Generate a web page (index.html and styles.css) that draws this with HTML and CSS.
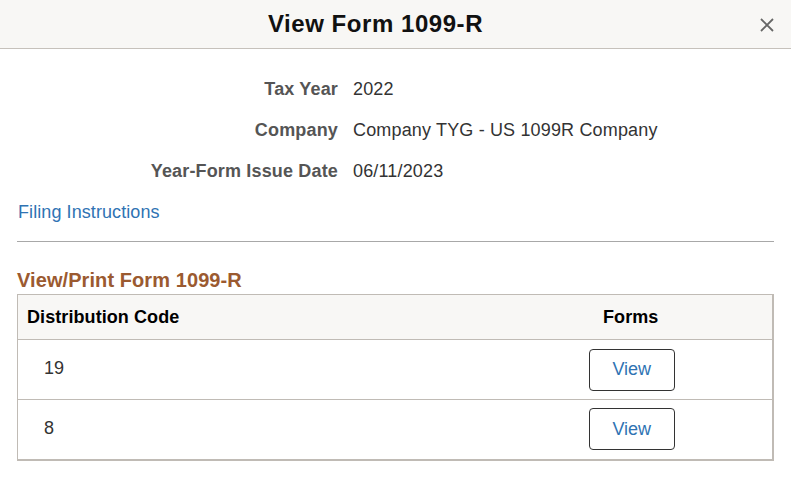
FILE: index.html
```html
<!DOCTYPE html>
<html>
<head>
<meta charset="utf-8">
<link rel="stylesheet" href="styles.css">
</head>
<body>
<div class="modal">
  <header class="hdr">
    <h1 class="title">View Form 1099-R</h1>
    <button class="close" aria-label="Close">
      <svg width="14" height="14" viewBox="0 0 14 14"><path d="M1 1L13 13M13 1L1 13" stroke="#666" stroke-width="1.8" fill="none"/></svg>
    </button>
  </header>
  <main class="body">
    <dl class="fields">
      <dt>Tax Year</dt><dd>2022</dd>
      <dt>Company</dt><dd>Company TYG - US 1099R Company</dd>
      <dt>Year-Form Issue Date</dt><dd>06/11/2023</dd>
    </dl>
    <a class="link" href="#">Filing Instructions</a>
    <hr class="sep">
    <h2 class="sect">View/Print Form 1099-R</h2>
    <table class="grid">
      <thead>
        <tr><th class="c1">Distribution Code</th><th class="c2">Forms</th></tr>
      </thead>
      <tbody>
        <tr><td class="c1">19</td><td class="c2"><button class="btn">View</button></td></tr>
        <tr><td class="c1">8</td><td class="c2"><button class="btn">View</button></td></tr>
      </tbody>
    </table>
  </main>
</div>
</body>
</html>
```
FILE: styles.css
```css
* { box-sizing: border-box; }
html, body { margin: 0; padding: 0; background: #fff; }
body { font-family: "Liberation Sans", Arial, sans-serif; color: #333; font-size: 18px; letter-spacing: 0.08px; }
.hdr {
  height: 49px;
  background: #f8f7f5;
  border-bottom: 1px solid #c6c1bb;
  display: flex;
  align-items: center;
  justify-content: center;
  padding-right: 40px;
  position: relative;
}
.title { margin: 0; font-size: 24px; font-weight: bold; color: #111; letter-spacing: 0.55px; }
.close {
  position: absolute; right: 17px; top: 18px;
  border: 0; background: transparent; padding: 0; width: 14px; height: 14px; display: flex;
}
.body { padding: 0 17px; }
.fields {
  margin: 30px 0 0 0;
  display: grid;
  grid-template-columns: 321px 1fr;
  column-gap: 15px;
  row-gap: 20px;
  line-height: 21px;
  letter-spacing: 0.16px;
}
.fields dt { text-align: right; font-weight: bold; color: #555; }
.fields dd { margin: 0; color: #333; }
.link { display: block; margin-top: 20px; margin-left: 1px; color: #2f73b3; text-decoration: none; line-height: 21px; }
.sep { margin: 18px 0 0 0; border: 0; border-top: 1px solid #a8a8a8; height: 0; }
.sect { margin: 27px 0 0 0; font-size: 20px; font-weight: bold; color: #9b5a30; line-height: 23px; }
.grid {
  margin-top: 2px;
  width: 757px;
  border-collapse: collapse;
  border: 1px solid #c0bbb5;
  border-right-width: 2px;
  border-bottom-width: 2px;
}
.grid th { background: #f8f7f5; height: 45px; font-weight: bold; color: #000; padding: 0 9px; border-bottom: 1px solid #c0bbb5; }
.grid th.c1 { text-align: left; width: 472px; }
.grid th.c2 { text-align: center; }
.grid td { height: 60px; border-bottom: 1px solid #c0bbb5; padding: 0; color: #333; }
.grid td.c1 { padding-left: 26px; padding-bottom: 2px; }
.grid td.c2 { text-align: center; }
.btn {
  width: 86px; height: 42px;
  border: 1px solid #333; border-radius: 4px;
  background: #fff;
  font-family: "Liberation Sans", Arial, sans-serif;
  font-size: 18px; color: #2f73b3;
  margin-left: 2px;
}
```
